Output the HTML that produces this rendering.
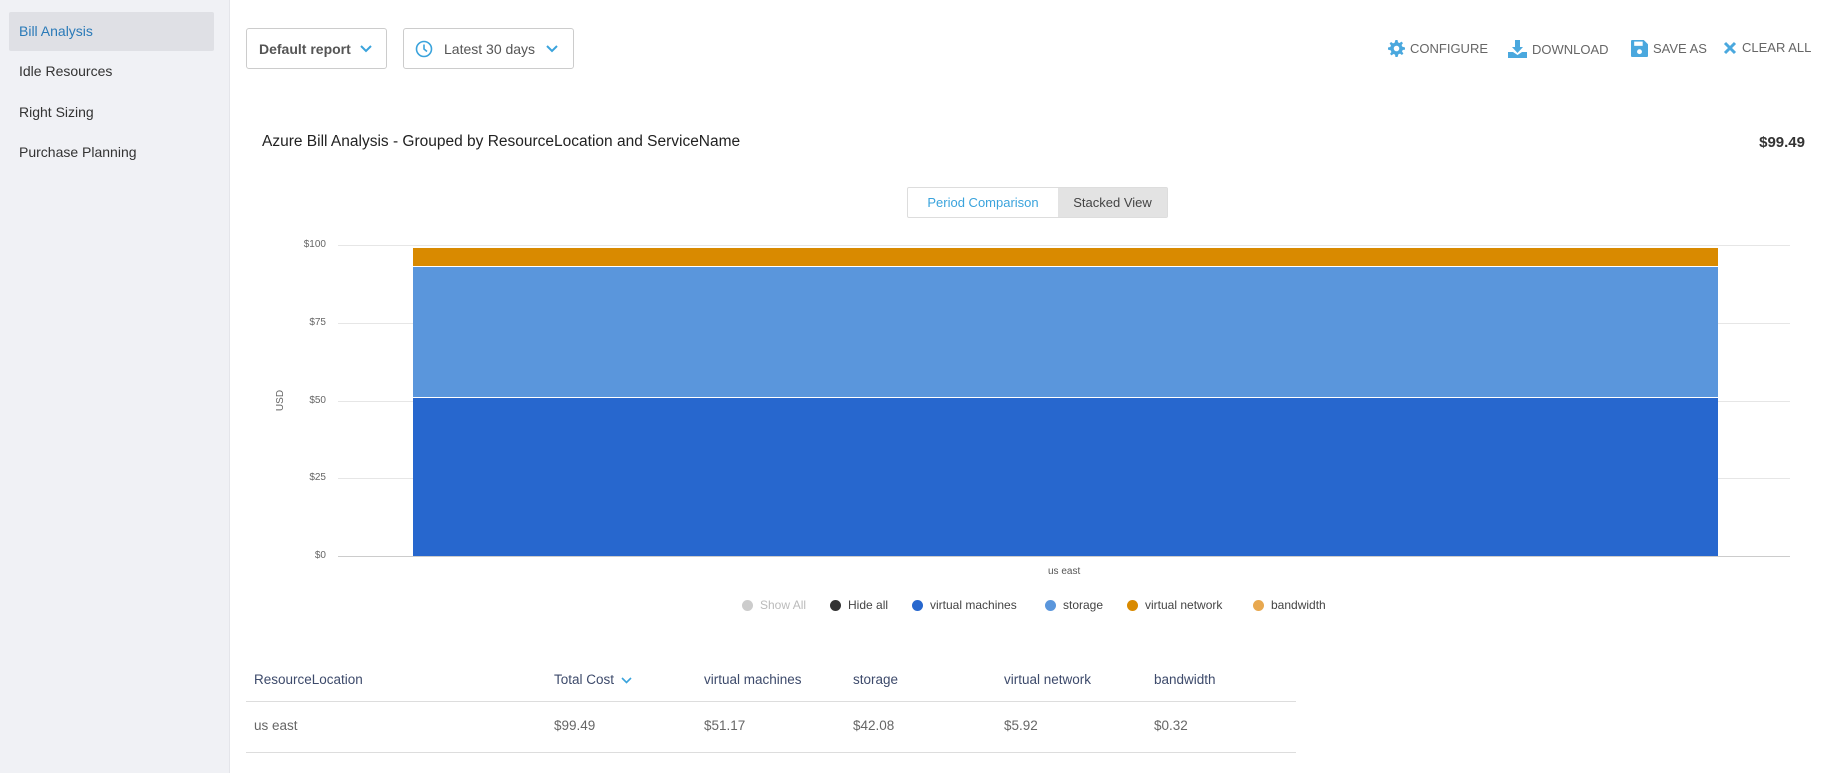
<!DOCTYPE html>
<html><head><meta charset="utf-8"><style>
*{margin:0;padding:0;box-sizing:border-box}
body{width:1828px;height:773px;overflow:hidden;background:#fff;font-family:"Liberation Sans",sans-serif;color:#333;position:relative}
.a{position:absolute;white-space:nowrap}
#side{position:absolute;left:0;top:0;width:230px;height:773px;background:#f0f1f5;border-right:1px solid #e4e5ea}
.nav{position:absolute;left:19px;font-size:14px;color:#333}
.dd{position:absolute;top:28px;height:41px;border:1px solid #ccc;border-radius:3px;font-size:14px;color:#555;display:flex;align-items:center}
.act{position:absolute;top:40px;font-size:13px;color:#666;display:flex;align-items:center;gap:5px}
.grid{position:absolute;left:338px;width:1452px;height:1px;background:#e6e6e6}
.yl{position:absolute;right:1502px;font-size:10px;color:#666}
.lg{position:absolute;top:598px;font-size:12px;color:#444;display:flex;align-items:center;gap:7px}
.dot{width:11px;height:11px;border-radius:50%;display:inline-block}
.th{position:absolute;top:672px;font-size:13.5px;color:#3d4a6b}
.td{position:absolute;top:718px;font-size:13.5px;color:#666}
</style></head><body>
<div id="side">
<div style="position:absolute;left:9px;top:12px;width:205px;height:39px;background:#dfe0e5;border-radius:2px"></div>
<div class="nav" style="top:23px;color:#2a7ab8">Bill Analysis</div>
<div class="nav" style="top:63px">Idle Resources</div>
<div class="nav" style="top:104px">Right Sizing</div>
<div class="nav" style="top:144px">Purchase Planning</div>
</div>
<div class="dd" style="left:246px;width:141px;padding-left:12px;font-weight:bold;color:#555">Default report<svg style="margin-left:9px" width="12" height="8" viewBox="0 0 12 8"><path d="M1 1l5 5 5-5" stroke="#3aa3dc" stroke-width="2" fill="none"/></svg></div>
<div class="dd" style="left:403px;width:171px;padding-left:11px"><svg width="18" height="18" viewBox="0 0 18 18"><circle cx="9" cy="9" r="7.5" stroke="#3aa3dc" stroke-width="1.6" fill="none"/><path d="M9 4.5V9l3 2.5" stroke="#3aa3dc" stroke-width="1.6" fill="none"/></svg><span style="margin-left:11px">Latest 30 days</span><svg style="margin-left:11px" width="12" height="8" viewBox="0 0 12 8"><path d="M1 1l5 5 5-5" stroke="#3aa3dc" stroke-width="2" fill="none"/></svg></div>
<div class="act" style="left:1388px"><svg width="17" height="17" viewBox="0 0 16 16"><path fill="#4aa8de" d="M7 0h2l.4 2.2 1.5.6 1.8-1.3 1.4 1.4-1.3 1.8.6 1.5L16 7v2l-2.2.4-.6 1.5 1.3 1.8-1.4 1.4-1.8-1.3-1.5.6L9 16H7l-.4-2.2-1.5-.6-1.8 1.3-1.4-1.4 1.3-1.8-.6-1.5L0 9V7l2.2-.4.6-1.5L1.5 3.3 2.9 1.9l1.8 1.3 1.5-.6z"/><circle cx="8" cy="8" r="2.6" fill="#fff"/></svg>CONFIGURE</div>
<div class="act" style="left:1508px"><svg width="19" height="18" viewBox="0 0 19 18"><path fill="#4aa8de" d="M7 0h5v7h3l-5.5 6L4 7h3z"/><path fill="#4aa8de" d="M0 12h5l4.5 3 4.5-3h5v6H0z"/></svg>DOWNLOAD</div>
<div class="act" style="left:1631px"><svg width="17" height="17" viewBox="0 0 16 16"><path fill="#4aa8de" d="M0 1a1 1 0 0 1 1-1h11l4 4v11a1 1 0 0 1-1 1H1a1 1 0 0 1-1-1z"/><rect x="3" y="1.5" width="8" height="4" fill="#fff"/><circle cx="8" cy="11" r="2.3" fill="#fff"/></svg>SAVE AS</div>
<div class="act" style="left:1723px"><svg width="14" height="14" viewBox="0 0 14 14"><path d="M2 2l10 10M12 2L2 12" stroke="#4aa8de" stroke-width="3"/></svg>CLEAR ALL</div>
<div class="a" style="left:262px;top:133px;font-size:15.5px;color:#222">Azure Bill Analysis - Grouped by ResourceLocation and ServiceName</div>
<div class="a" style="right:23px;top:134px;font-size:15px;font-weight:bold;color:#333">$99.49</div>
<div style="position:absolute;left:907px;top:187px;width:261px;height:31px;border:1px solid #ddd;border-radius:2px;display:flex;font-size:13px">
<div style="width:150px;display:flex;align-items:center;justify-content:center;color:#3aa3dc">Period Comparison</div>
<div style="flex:1;background:#e3e3e3;display:flex;align-items:center;justify-content:center;color:#444">Stacked View</div></div>
<div class="grid" style="top:245px"></div><div class="grid" style="top:323px"></div><div class="grid" style="top:401px"></div><div class="grid" style="top:478px"></div><div class="grid" style="top:556px;background:#ccc"></div>
<div class="yl" style="top:239px">$100</div><div class="yl" style="top:317px">$75</div><div class="yl" style="top:395px">$50</div><div class="yl" style="top:472px">$25</div><div class="yl" style="top:550px">$0</div>
<div class="a" style="left:270px;top:395px;font-size:10px;color:#666;transform:rotate(-90deg)">USD</div>
<div style="position:absolute;left:413px;top:248px;width:1305px;height:18px;background:#d98a00"></div>
<div style="position:absolute;left:413px;top:267px;width:1305px;height:130px;background:#5a96dc"></div>
<div style="position:absolute;left:413px;top:398px;width:1305px;height:158px;background:#2767ce"></div>
<div class="a" style="left:1048px;top:566px;font-size:10px;color:#555">us east</div>
<div class="lg" style="left:742px;color:#bbb"><span class="dot" style="background:#ccc"></span>Show All</div>
<div class="lg" style="left:830px"><span class="dot" style="background:#333"></span>Hide all</div>
<div class="lg" style="left:912px"><span class="dot" style="background:#2767ce"></span>virtual machines</div>
<div class="lg" style="left:1045px"><span class="dot" style="background:#5a96dc"></span>storage</div>
<div class="lg" style="left:1127px"><span class="dot" style="background:#d98a00"></span>virtual network</div>
<div class="lg" style="left:1253px"><span class="dot" style="background:#e8a84f"></span>bandwidth</div>
<div class="th" style="left:254px">ResourceLocation</div>
<div class="th" style="left:554px">Total Cost <svg width="11" height="7" viewBox="0 0 11 7" style="margin-left:3px"><path d="M1 1l4.5 4.5L10 1" stroke="#3aa3dc" stroke-width="1.6" fill="none"/></svg></div>
<div class="th" style="left:704px">virtual machines</div>
<div class="th" style="left:853px">storage</div>
<div class="th" style="left:1004px">virtual network</div>
<div class="th" style="left:1154px">bandwidth</div>
<div style="position:absolute;left:246px;top:701px;width:1050px;height:1px;background:#ddd"></div>
<div class="td" style="left:254px">us east</div><div class="td" style="left:554px">$99.49</div><div class="td" style="left:704px">$51.17</div><div class="td" style="left:853px">$42.08</div><div class="td" style="left:1004px">$5.92</div><div class="td" style="left:1154px">$0.32</div>
<div style="position:absolute;left:246px;top:752px;width:1050px;height:1px;background:#ddd"></div>
</body></html>
